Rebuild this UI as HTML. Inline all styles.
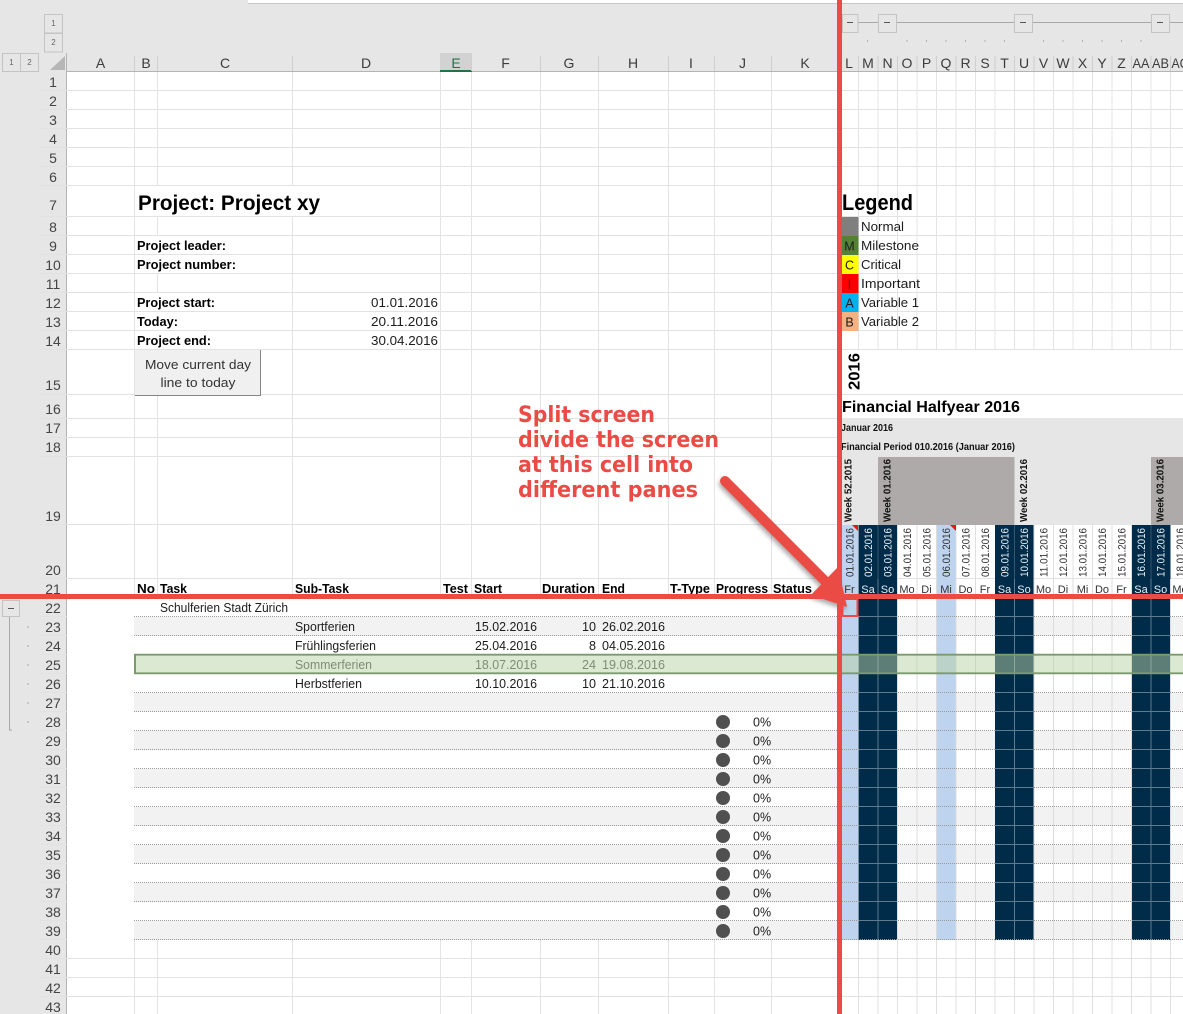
<!DOCTYPE html>
<html><head><meta charset="utf-8"><title>Split screen</title>
<style>
html,body{margin:0;padding:0;background:#fff;overflow:hidden}
svg{display:block;font-family:"Liberation Sans",sans-serif}
text{fill:#1c1c1c;font-size:12.5px}
.b{font-weight:700;fill:#000;font-size:13px}
.c{fill:#3c3c3c;font-size:14px;text-anchor:middle}
.r{fill:#444;font-size:14px;text-anchor:middle}
.o{fill:#666;font-size:8px;text-anchor:middle}
.g{fill:#7c8f74}
.w{fill:#111;font-size:10.5px;font-weight:700}
.d{fill:#333;font-size:11px}
.n{fill:#e8eef2;font-size:11px}
.y{fill:#333;font-size:11px;text-anchor:middle}
.z{fill:#e8eef2;font-size:11px;text-anchor:middle}
.a{fill:#ea4b45;font-family:"DejaVu Sans",sans-serif;font-weight:700;font-size:22px}
.m{text-anchor:middle;font-size:13px}
</style></head><body>
<svg width="1183" height="1014" viewBox="0 0 1183 1014" xmlns="http://www.w3.org/2000/svg">
<defs><filter id="s" x="-20%" y="-20%" width="140%" height="140%"><feDropShadow dx="-1" dy="3" stdDeviation="2.5" flood-color="#000" flood-opacity=".35"/></filter></defs>

<rect width="1183" height="1014" fill="#fff"/>
<!-- header chrome -->
<rect width="1183" height="71.5" fill="#e6e6e6"/>
<rect y="71" width="67" height="943" fill="#e6e6e6"/>
<rect x="248" width="935" height="3" fill="#fff"/>
<path d="M248 3.5H1183" stroke="#c8c8c8"/>
<path d="M67 71.5H1183M66.5 53V1014" stroke="#b4b4b4"/>
<rect x="440" y="53" width="32" height="18" fill="#d2d2d2"/>
<rect x="440" y="70" width="32" height="2" fill="#217346"/>
<path d="M50 70L65 56V70Z" fill="#b6b6b6"/>

<!-- header separators -->
<path d="M134.5 56V71M157.5 56V71M292.5 56V71M471.5 56V71M540.5 56V71M598.5 56V71M668.5 56V71M714.5 56V71M771.5 56V71M858.5 56V71M878 56V71M897.5 56V71M917 56V71M936.5 56V71M956 56V71M975.5 56V71M995 56V71M1014.5 56V71M1034 56V71M1053.5 56V71M1073 56V71M1092.5 56V71M1112 56V71M1131.5 56V71M1151 56V71M1170.5 56V71" stroke="#cfcfcf"/>

<!-- cell grid -->
<path d="M40 90.5H1183M40 109.5H1183M40 128.5H1183M40 147.5H1183M40 166.5H1183M40 185.5H1183M40 216.5H1183M40 235.5H1183M40 254.5H1183M40 273.5H1183M40 292.5H1183M40 311.5H1183M40 330.5H1183M40 349.5H1183M40 394.5H1183M40 418.5H1183M40 437.5H1183M40 456.5H838M40 524.5H838M40 578.5H1183M40 597.5H1183M40 616.5H67M40 635.5H67M40 654.5H67M40 673.5H67M40 692.5H67M40 711.5H67M40 730.5H67M40 749.5H67M40 768.5H67M40 787.5H67M40 806.5H67M40 825.5H67M40 844.5H67M40 863.5H67M40 882.5H67M40 901.5H67M40 920.5H67M40 939.5H67M40 958.5H1183M40 977.5H1183M40 996.5H1183" stroke="#e2e2e2"/>
<path d="M134.5 72V1014M157.5 72V1014M292.5 72V1014M440.5 72V1014M471.5 72V1014M540.5 72V1014M598.5 72V1014M668.5 72V1014M714.5 72V1014M771.5 72V1014M858.5 72V349M878 72V349M897.5 72V349M917 72V349M936.5 72V349M956 72V349M975.5 72V349M995 72V349M1014.5 72V349M1034 72V349M1053.5 72V349M1073 72V349M1092.5 72V349M1112 72V349M1131.5 72V349M1151 72V349M1170.5 72V349" stroke="#e4e4e4"/>
<!-- spill-over masks -->
<rect x="135" y="186" width="190" height="30" fill="#fff"/>
<rect x="135" y="236" width="130" height="18" fill="#fff"/>
<rect x="135" y="255" width="130" height="18" fill="#fff"/>
<rect x="135" y="293" width="130" height="18" fill="#fff"/>
<rect x="135" y="312" width="130" height="18" fill="#fff"/>
<rect x="135" y="331" width="130" height="18" fill="#fff"/>
<rect x="135" y="579" width="680" height="15" fill="#fff"/>
<path d="M157.5 579V594" stroke="#e4e4e4"/><path d="M292.5 579V594M440.5 579V594M471.5 579V594M540.5 579V594M598.5 579V594M668.5 579V594M714.5 579V594M771.5 579V594" stroke="#e4e4e4"/>

<!-- table body -->
<rect x="67" y="598" width="771" height="342" fill="#fff"/>
<rect x="842" y="598" width="341" height="342" fill="#fff"/>
<path d="M134 617H1183V636H134ZM134 693H1183V712H134ZM134 731H1183V750H134ZM134 769H1183V788H134ZM134 807H1183V826H134ZM134 845H1183V864H134ZM134 883H1183V902H134ZM134 921H1183V940H134Z" fill="#f2f2f2"/>
<rect x="67" y="598" width="67" height="342" fill="#fff"/>
<rect x="838" y="598" width="4" height="342" fill="#fff"/>
<path d="M858.5 940V1014M878 940V1014M897.5 940V1014M917 940V1014M936.5 940V1014M956 940V1014M975.5 940V1014M995 940V1014M1014.5 940V1014M1034 940V1014M1053.5 940V1014M1073 940V1014M1092.5 940V1014M1112 940V1014M1131.5 940V1014M1151 940V1014M1170.5 940V1014" stroke="#e0e0e0"/>

<!-- gantt columns -->
<path d="M842 525H858V940H842ZM936.5 525H956V940H936.5Z" fill="#bdd3ee"/>
<path d="M858.5 525H897.5V940H858.5ZM995 525H1034V940H995ZM1131.5 525H1170.5V940H1131.5Z" fill="#002b49"/>
<path d="M917 579V940M975.5 579V940M1053.5 579V940M1073 579V940M1092.5 579V940M1112 579V940M1170.5 579V940M897.5 525V940M956 525V940M936.5 525V940M1034 525V940M1131.5 525V940" stroke="#dcdcdc"/>
<path d="M917 525V579M975.5 525V579M1053.5 525V579M1073 525V579M1092.5 525V579M1112 525V579" stroke="#e0e0e0"/>
<path d="M878 579V940M1014.5 579V940M1151 579V940" stroke="#5f7b90"/>
<path d="M878 525V579M1014.5 525V579M1151 525V579" stroke="#38566c"/>

<!-- row 25 -->
<rect x="135" y="655" width="703" height="18" fill="#dbe8d2"/>
<rect x="842" y="655" width="341" height="18" fill="rgb(183,209,165)" opacity=".5"/>
<path d="M134 654.7H1183M134 673.3H1183" stroke="#7b9a6e" stroke-width="1.8"/>
<path d="M135 654V674" stroke="#7b9a6e" stroke-width="2"/>

<!-- dotted rows -->
<path d="M134 616.5H1183M134 635.5H1183M134 692.5H1183M134 711.5H1183M134 730.5H1183M134 749.5H1183M134 768.5H1183M134 787.5H1183M134 806.5H1183M134 825.5H1183M134 844.5H1183M134 863.5H1183M134 882.5H1183M134 901.5H1183M134 920.5H1183M134 939.5H1183" stroke="#9a9a9a" stroke-dasharray="1 1"/>
<path d="M859 616.5H897M859 635.5H897M859 692.5H897M859 711.5H897M859 730.5H897M859 749.5H897M859 768.5H897M859 787.5H897M859 806.5H897M859 825.5H897M859 844.5H897M859 863.5H897M859 882.5H897M859 901.5H897M859 920.5H897M995 616.5H1034M995 635.5H1034M995 692.5H1034M995 711.5H1034M995 730.5H1034M995 749.5H1034M995 768.5H1034M995 787.5H1034M995 806.5H1034M995 825.5H1034M995 844.5H1034M995 863.5H1034M995 882.5H1034M995 901.5H1034M995 920.5H1034M1132 616.5H1170M1132 635.5H1170M1132 692.5H1170M1132 711.5H1170M1132 730.5H1170M1132 749.5H1170M1132 768.5H1170M1132 787.5H1170M1132 806.5H1170M1132 825.5H1170M1132 844.5H1170M1132 863.5H1170M1132 882.5H1170M1132 901.5H1170M1132 920.5H1170" stroke="#5f7b90"/>

<!-- gantt header -->
<rect x="842" y="418" width="341" height="107" fill="#e7e6e6"/>
<path d="M878 457H1014.5V525H878ZM1151 457H1183V525H1151Z" fill="#aeaaaa"/>
<rect x="842" y="349" width="341" height="1" fill="#e2e2e2"/>
<rect x="842" y="394" width="341" height="1" fill="#e2e2e2"/>
<path d="M852 525H858V531ZM950 525H956V531Z" fill="#e8141c"/>

<!-- legend swatches -->
<rect x="842" y="217" width="16.500" height="19" fill="#7f7f7f"/>
<rect x="842" y="236" width="16.500" height="19" fill="#548235"/>
<rect x="842" y="255" width="16.500" height="19" fill="#ffff00"/>
<rect x="842" y="274" width="16.500" height="19" fill="#ff0000"/>
<rect x="842" y="293" width="16.500" height="19" fill="#00b0f0"/>
<rect x="842" y="312" width="16.500" height="19" fill="#f4b183"/>

<!-- button -->
<rect x="135" y="350" width="125.500" height="45" fill="#f0f0f0"/>
<path d="M260.500 350V395.500H135" fill="none" stroke="#868686"/>

<!-- outline controls -->
<g fill="#e6e6e6" stroke="#c4c4c4">
<rect x="44.500" y="14.500" width="18" height="18.500"/><rect x="44.500" y="33.500" width="18" height="18.500"/>
<rect x="2.500" y="53.500" width="18" height="18"/><rect x="20.500" y="53.500" width="18" height="18"/>
<rect x="842.500" y="14.500" width="15.500" height="18"/><rect x="878.500" y="14.500" width="18" height="18"/>
<rect x="1014.500" y="14.500" width="18" height="18"/><rect x="1151.500" y="14.500" width="18" height="18"/>
<rect x="2.500" y="600.500" width="17" height="16"/>
</g>
<path d="M858 22.500H878M897 22.500H1014M1033 22.500H1151M1170 22.500H1183" stroke="#a8a8a8"/>
<path d="M9.500 617V730H12" fill="none" stroke="#a8a8a8"/>
<path d="M847 22.500H853M884 22.500H890M1020 22.500H1026M1157 22.500H1163M8 608.500H14" stroke="#555"/>
<path d="M867.500 40V42M907 40V42M926.500 40V42M946 40V42M965.500 40V42M985 40V42M1004.500 40V42M1043.500 40V42M1063 40V42M1082.500 40V42M1102 40V42M1121.500 40V42M1141 40V42" stroke="#b0b0b0"/>
<path d="M27 627H29M27 646H29M27 665H29M27 684H29M27 703H29M27 722H29" stroke="#aaa"/>
<text class="o" x="53.500" y="26">1</text><text class="o" x="53.500" y="45">2</text><text class="o" x="11.500" y="65">1</text><text class="o" x="29.500" y="65">2</text>

<!-- column letters -->
<text class="c" x="100.500" y="68">A</text><text class="c" x="146" y="68">B</text><text class="c" x="225" y="68">C</text><text class="c" x="366" y="68">D</text><text class="c" x="456" y="68" style="fill:#217346">E</text><text class="c" x="505.500" y="68">F</text><text class="c" x="569" y="68">G</text><text class="c" x="633" y="68">H</text><text class="c" x="691" y="68">I</text><text class="c" x="742.500" y="68">J</text><text class="c" x="805" y="68">K</text><text class="c" x="849" y="68">L</text><text class="c" x="868" y="68">M</text><text class="c" x="887.500" y="68">N</text><text class="c" x="907" y="68">O</text><text class="c" x="926.500" y="68">P</text><text class="c" x="946" y="68">Q</text><text class="c" x="965.500" y="68">R</text><text class="c" x="985" y="68">S</text><text class="c" x="1004.500" y="68">T</text><text class="c" x="1024" y="68">U</text><text class="c" x="1043.500" y="68">V</text><text class="c" x="1063" y="68">W</text><text class="c" x="1082.500" y="68">X</text><text class="c" x="1102" y="68">Y</text><text class="c" x="1121.500" y="68">Z</text><text class="c" x="1141" y="68" textLength="17" lengthAdjust="spacingAndGlyphs">AA</text><text class="c" x="1160.500" y="68" textLength="17" lengthAdjust="spacingAndGlyphs">AB</text><text class="c" x="1180" y="68" textLength="17" lengthAdjust="spacingAndGlyphs">AC</text>

<!-- row numbers -->
<text class="r" x="53" y="87">1</text><text class="r" x="53" y="106">2</text><text class="r" x="53" y="125">3</text><text class="r" x="53" y="144">4</text><text class="r" x="53" y="163">5</text><text class="r" x="53" y="182">6</text><text class="r" x="53" y="210">7</text><text class="r" x="53" y="232">8</text><text class="r" x="53" y="251">9</text><text class="r" x="53" y="270">10</text><text class="r" x="53" y="289">11</text><text class="r" x="53" y="308">12</text><text class="r" x="53" y="327">13</text><text class="r" x="53" y="346">14</text><text class="r" x="53" y="390">15</text><text class="r" x="53" y="414">16</text><text class="r" x="53" y="433">17</text><text class="r" x="53" y="452">18</text><text class="r" x="53" y="521">19</text><text class="r" x="53" y="575">20</text><text class="r" x="53" y="594">21</text><text class="r" x="53" y="613">22</text><text class="r" x="53" y="632">23</text><text class="r" x="53" y="651">24</text><text class="r" x="53" y="670">25</text><text class="r" x="53" y="689">26</text><text class="r" x="53" y="708">27</text><text class="r" x="53" y="727">28</text><text class="r" x="53" y="746">29</text><text class="r" x="53" y="765">30</text><text class="r" x="53" y="784">31</text><text class="r" x="53" y="803">32</text><text class="r" x="53" y="822">33</text><text class="r" x="53" y="841">34</text><text class="r" x="53" y="860">35</text><text class="r" x="53" y="879">36</text><text class="r" x="53" y="898">37</text><text class="r" x="53" y="917">38</text><text class="r" x="53" y="936">39</text><text class="r" x="53" y="955">40</text><text class="r" x="53" y="974">41</text><text class="r" x="53" y="993">42</text><text class="r" x="53" y="1012">43</text>

<!-- project block -->
<text class="b" x="138" y="210" style="font-size:21px" textLength="182" lengthAdjust="spacingAndGlyphs">Project: Project xy</text>
<text class="b" x="137" y="250" textLength="89" lengthAdjust="spacingAndGlyphs">Project leader:</text>
<text class="b" x="137" y="269" textLength="99" lengthAdjust="spacingAndGlyphs">Project number:</text>
<text class="b" x="137" y="307" textLength="78" lengthAdjust="spacingAndGlyphs">Project start:</text>
<text class="b" x="137" y="326" textLength="41" lengthAdjust="spacingAndGlyphs">Today:</text>
<text class="b" x="137" y="345" textLength="74" lengthAdjust="spacingAndGlyphs">Project end:</text>
<text x="371" y="307" textLength="67" lengthAdjust="spacingAndGlyphs">01.01.2016</text>
<text x="371" y="326" textLength="67" lengthAdjust="spacingAndGlyphs">20.11.2016</text>
<text x="371" y="345" textLength="67" lengthAdjust="spacingAndGlyphs">30.04.2016</text>
<text class="m" x="198" y="369" textLength="106" lengthAdjust="spacingAndGlyphs" style="fill:#333">Move current day</text>
<text class="m" x="198" y="387" textLength="75" lengthAdjust="spacingAndGlyphs" style="fill:#333">line to today</text>

<!-- table header -->
<text class="b" x="137" y="593" textLength="18" lengthAdjust="spacingAndGlyphs">No</text>
<text class="b" x="160" y="593" textLength="27" lengthAdjust="spacingAndGlyphs">Task</text>
<text class="b" x="295" y="593" textLength="54" lengthAdjust="spacingAndGlyphs">Sub-Task</text>
<text class="b" x="443" y="593" textLength="25" lengthAdjust="spacingAndGlyphs">Test</text>
<text class="b" x="474" y="593" textLength="28" lengthAdjust="spacingAndGlyphs">Start</text>
<text class="b" x="542" y="593" textLength="53" lengthAdjust="spacingAndGlyphs">Duration</text>
<text class="b" x="602" y="593" textLength="23" lengthAdjust="spacingAndGlyphs">End</text>
<text class="b" x="670" y="593" textLength="40" lengthAdjust="spacingAndGlyphs">T-Type</text>
<text class="b" x="716" y="593" textLength="52" lengthAdjust="spacingAndGlyphs">Progress</text>
<text class="b" x="773" y="593" textLength="39" lengthAdjust="spacingAndGlyphs">Status</text>

<!-- table data -->
<text x="160" y="612" textLength="128" lengthAdjust="spacingAndGlyphs">Schulferien Stadt Zürich</text>
<text x="295" y="631" textLength="60" lengthAdjust="spacingAndGlyphs">Sportferien</text>
<text x="475" y="631" textLength="62" lengthAdjust="spacingAndGlyphs">15.02.2016</text>
<text x="582" y="631" textLength="14" lengthAdjust="spacingAndGlyphs">10</text>
<text x="602" y="631" textLength="63" lengthAdjust="spacingAndGlyphs">26.02.2016</text>
<text x="295" y="650" textLength="81" lengthAdjust="spacingAndGlyphs">Frühlingsferien</text>
<text x="475" y="650" textLength="62" lengthAdjust="spacingAndGlyphs">25.04.2016</text>
<text x="589" y="650" textLength="7" lengthAdjust="spacingAndGlyphs">8</text>
<text x="602" y="650" textLength="63" lengthAdjust="spacingAndGlyphs">04.05.2016</text>
<text class="g" x="295" y="669" textLength="77" lengthAdjust="spacingAndGlyphs">Sommerferien</text>
<text class="g" x="475" y="669" textLength="62" lengthAdjust="spacingAndGlyphs">18.07.2016</text>
<text class="g" x="582" y="669" textLength="14" lengthAdjust="spacingAndGlyphs">24</text>
<text class="g" x="602" y="669" textLength="63" lengthAdjust="spacingAndGlyphs">19.08.2016</text>
<text x="295" y="688" textLength="67" lengthAdjust="spacingAndGlyphs">Herbstferien</text>
<text x="475" y="688" textLength="62" lengthAdjust="spacingAndGlyphs">10.10.2016</text>
<text x="582" y="688" textLength="14" lengthAdjust="spacingAndGlyphs">10</text>
<text x="602" y="688" textLength="63" lengthAdjust="spacingAndGlyphs">21.10.2016</text>

<!-- progress -->
<g fill="#505050"><circle cx="723" cy="722" r="7"/><circle cx="723" cy="741" r="7"/><circle cx="723" cy="760" r="7"/><circle cx="723" cy="779" r="7"/><circle cx="723" cy="798" r="7"/><circle cx="723" cy="817" r="7"/><circle cx="723" cy="836" r="7"/><circle cx="723" cy="855" r="7"/><circle cx="723" cy="874" r="7"/><circle cx="723" cy="893" r="7"/><circle cx="723" cy="912" r="7"/><circle cx="723" cy="931" r="7"/></g>
<text x="753" y="726.500">0%</text><text x="753" y="745.500">0%</text><text x="753" y="764.500">0%</text><text x="753" y="783.500">0%</text><text x="753" y="802.500">0%</text><text x="753" y="821.500">0%</text><text x="753" y="840.500">0%</text><text x="753" y="859.500">0%</text><text x="753" y="878.500">0%</text><text x="753" y="897.500">0%</text><text x="753" y="916.500">0%</text><text x="753" y="935.500">0%</text>

<!-- legend -->
<text class="b" x="842" y="210" style="font-size:22px" textLength="71" lengthAdjust="spacingAndGlyphs">Legend</text>
<text x="861" y="231" textLength="43" lengthAdjust="spacingAndGlyphs">Normal</text>
<text x="861" y="250" textLength="58" lengthAdjust="spacingAndGlyphs">Milestone</text>
<text x="861" y="269" textLength="40" lengthAdjust="spacingAndGlyphs">Critical</text>
<text x="861" y="288" textLength="59" lengthAdjust="spacingAndGlyphs">Important</text>
<text x="861" y="307" textLength="58" lengthAdjust="spacingAndGlyphs">Variable 1</text>
<text x="861" y="326" textLength="58" lengthAdjust="spacingAndGlyphs">Variable 2</text>
<g text-anchor="middle"><text x="849.500" y="250.500">M</text><text x="849.500" y="269.500">C</text><text x="849.500" y="288.500">I</text><text x="849.500" y="307.500">A</text><text x="849.500" y="326.500">B</text></g>

<text class="b" transform="translate(859.500,390) rotate(-90)" style="font-size:16px" textLength="37" lengthAdjust="spacingAndGlyphs">2016</text>
<text class="b" x="842" y="412" style="font-size:16px" textLength="178" lengthAdjust="spacingAndGlyphs">Financial Halfyear 2016</text>
<text class="w" x="841" y="431" textLength="52" lengthAdjust="spacingAndGlyphs">Januar 2016</text>
<text class="w" x="841" y="450" textLength="174" lengthAdjust="spacingAndGlyphs">Financial Period 010.2016 (Januar 2016)</text>
<text class="w" transform="translate(851.500,522) rotate(-90)" textLength="63" lengthAdjust="spacingAndGlyphs">Week 52.2015</text>
<text class="w" transform="translate(890.500,522) rotate(-90)" textLength="63" lengthAdjust="spacingAndGlyphs">Week 01.2016</text>
<text class="w" transform="translate(1027,522) rotate(-90)" textLength="63" lengthAdjust="spacingAndGlyphs">Week 02.2016</text>
<text class="w" transform="translate(1163.500,522) rotate(-90)" textLength="63" lengthAdjust="spacingAndGlyphs">Week 03.2016</text>

<!-- dates -->
<text class="d" transform="translate(853.500,577) rotate(-90)" textLength="49" lengthAdjust="spacingAndGlyphs">01.01.2016</text>
<text class="n" transform="translate(872,577) rotate(-90)" textLength="49" lengthAdjust="spacingAndGlyphs">02.01.2016</text>
<text class="n" transform="translate(891.500,577) rotate(-90)" textLength="49" lengthAdjust="spacingAndGlyphs">03.01.2016</text>
<text class="d" transform="translate(911,577) rotate(-90)" textLength="49" lengthAdjust="spacingAndGlyphs">04.01.2016</text>
<text class="d" transform="translate(930.500,577) rotate(-90)" textLength="49" lengthAdjust="spacingAndGlyphs">05.01.2016</text>
<text class="d" transform="translate(950,577) rotate(-90)" textLength="49" lengthAdjust="spacingAndGlyphs">06.01.2016</text>
<text class="d" transform="translate(969.500,577) rotate(-90)" textLength="49" lengthAdjust="spacingAndGlyphs">07.01.2016</text>
<text class="d" transform="translate(989,577) rotate(-90)" textLength="49" lengthAdjust="spacingAndGlyphs">08.01.2016</text>
<text class="n" transform="translate(1008.500,577) rotate(-90)" textLength="49" lengthAdjust="spacingAndGlyphs">09.01.2016</text>
<text class="n" transform="translate(1028,577) rotate(-90)" textLength="49" lengthAdjust="spacingAndGlyphs">10.01.2016</text>
<text class="d" transform="translate(1047.500,577) rotate(-90)" textLength="49" lengthAdjust="spacingAndGlyphs">11.01.2016</text>
<text class="d" transform="translate(1067,577) rotate(-90)" textLength="49" lengthAdjust="spacingAndGlyphs">12.01.2016</text>
<text class="d" transform="translate(1086.500,577) rotate(-90)" textLength="49" lengthAdjust="spacingAndGlyphs">13.01.2016</text>
<text class="d" transform="translate(1106,577) rotate(-90)" textLength="49" lengthAdjust="spacingAndGlyphs">14.01.2016</text>
<text class="d" transform="translate(1125.500,577) rotate(-90)" textLength="49" lengthAdjust="spacingAndGlyphs">15.01.2016</text>
<text class="n" transform="translate(1145,577) rotate(-90)" textLength="49" lengthAdjust="spacingAndGlyphs">16.01.2016</text>
<text class="n" transform="translate(1164.500,577) rotate(-90)" textLength="49" lengthAdjust="spacingAndGlyphs">17.01.2016</text>
<text class="d" transform="translate(1184,577) rotate(-90)" textLength="49" lengthAdjust="spacingAndGlyphs">18.01.2016</text>

<!-- days -->
<text class="y" x="849.500" y="593">Fr</text><text class="z" x="868" y="593">Sa</text><text class="z" x="887.500" y="593">So</text><text class="y" x="907" y="593">Mo</text><text class="y" x="926.500" y="593">Di</text><text class="y" x="946" y="593">Mi</text><text class="y" x="965.500" y="593">Do</text><text class="y" x="985" y="593">Fr</text><text class="z" x="1004.500" y="593">Sa</text><text class="z" x="1024" y="593">So</text><text class="y" x="1043.500" y="593">Mo</text><text class="y" x="1063" y="593">Di</text><text class="y" x="1082.500" y="593">Mi</text><text class="y" x="1102" y="593">Do</text><text class="y" x="1121.500" y="593">Fr</text><text class="z" x="1141" y="593">Sa</text><text class="z" x="1160.500" y="593">So</text><text class="y" x="1180" y="593">Mo</text>

<!-- annotation -->
<text class="a" x="518" y="422" textLength="137" lengthAdjust="spacingAndGlyphs">Split screen</text>
<text class="a" x="518" y="447" textLength="201" lengthAdjust="spacingAndGlyphs">divide the screen</text>
<text class="a" x="518" y="472" textLength="175" lengthAdjust="spacingAndGlyphs">at this cell into</text>
<text class="a" x="518" y="497" textLength="180" lengthAdjust="spacingAndGlyphs">different panes</text>

<!-- red split lines and arrow -->
<g filter="url(#s)"><path d="M725 481L826 582" stroke="#ea4b45" stroke-width="10" stroke-linecap="round" fill="none"/><path d="M847 607L811 595L838 567Z" fill="#ea4b45"/></g>
<rect x="837" width="5" height="1014" fill="#ea4b45"/>
<rect y="594" width="1183" height="5" fill="#ea4b45"/>
<rect x="842.500" y="599" width="15" height="17" fill="none" stroke="#ea4b45" stroke-width="2"/>
</svg>
</body></html>
